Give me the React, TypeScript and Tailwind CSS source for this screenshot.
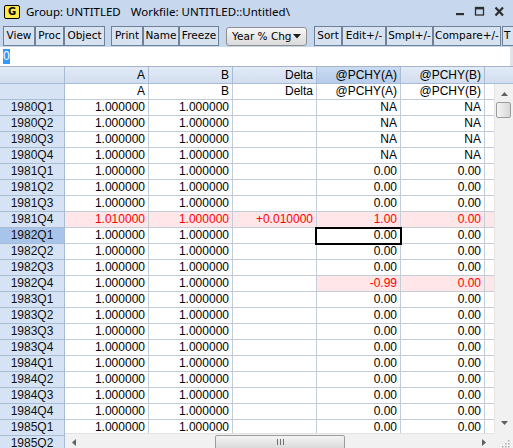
import React from "react";

type Hl = "none" | "row" | "pch";
interface DataRow {
  label: string;
  a: string;
  b: string;
  d: string;
  pa: string;
  pb: string;
  hl: Hl;
}

function buildRows(): DataRow[] {
  const out: DataRow[] = [];
  for (let y = 1980; y <= 1985; y++) {
    for (let q = 1; q <= 4; q++) {
      const label = `${y}Q${q}`;
      const early = y === 1980;
      let a = "1.000000";
      let d = "";
      let pa = early ? "NA" : "0.00";
      const pb = early ? "NA" : "0.00";
      let hl: Hl = "none";
      if (label === "1981Q4") {
        a = "1.010000";
        d = "+0.010000";
        pa = "1.00";
        hl = "row";
      }
      if (label === "1982Q4") {
        pa = "-0.99";
        hl = "pch";
      }
      out.push({ label, a, b: "1.000000", d, pa, pb, hl });
    }
  }
  return out.slice(0, 22);
}

const rows = buildRows();

function ToolButton({ label, className }: { label: string; className: string }) {
  return (
    <div
      className={
        "h-[20px] shrink-0 flex items-center justify-center border border-[#6f8099] bg-[#d8e3f2] text-[10.5px] text-black font-['DejaVu_Sans',sans-serif] " +
        className
      }
    >
      {label}
    </div>
  );
}

function HeaderCell({ label, selected }: { label: string; selected?: boolean }) {
  return (
    <div
      className={
        "h-[17px] w-[84px] shrink-0 border-b border-r border-[#a9bcd6] pr-[3px] pt-[1px] text-right text-[12px] leading-[15px] text-black bg-gradient-to-b " +
        (selected ? "from-[#cadbf3] to-[#b7cceb]" : "from-[#e2ebf7] to-[#d2deef]")
      }
    >
      {label}
    </div>
  );
}

function DataCell({
  value,
  pink,
  children,
}: {
  value: string;
  pink?: boolean;
  children?: React.ReactNode;
}) {
  return (
    <div
      className={
        "relative h-[16px] w-[84px] shrink-0 border-b border-r border-[#c4ccd8] pr-[3px] text-right text-[12px] leading-[15px] " +
        (pink ? "bg-[#ffe6e8] text-[#ff0000]" : "bg-white text-black")
      }
    >
      {value}
      {children}
    </div>
  );
}

function Arrow({ dir }: { dir: "up" | "down" | "left" | "right" }) {
  const pts =
    dir === "up"
      ? "0,4 7,4 3.5,0"
      : dir === "down"
      ? "0,0 7,0 3.5,4"
      : dir === "left"
      ? "4,0 4,7 0,3.5"
      : "0,0 0,7 4,3.5";
  const w = dir === "up" || dir === "down" ? 7 : 4;
  const h = dir === "up" || dir === "down" ? 4 : 7;
  return (
    <svg width={w} height={h} viewBox={`0 0 ${w} ${h}`}>
      <polygon points={pts} fill="#606060" />
    </svg>
  );
}

export default function App() {
  return (
    <div className="relative w-[513px] h-[448px] overflow-hidden bg-[#c6d7ee] font-['Liberation_Sans',Arial,sans-serif] text-black">
      {/* Title bar */}
      <div className="h-[24px] flex items-center pl-[4px] pr-[7px]">
        <div className="w-[16px] h-[14px] rounded-[2px] border border-black bg-[#ffe94d] flex items-center justify-center text-[10px] font-bold leading-none font-['DejaVu_Sans',sans-serif]">
          G
        </div>
        <span className="ml-[6px] font-['Noto_Sans',sans-serif] text-[11.5px] leading-none">
          Group: UNTITLED
        </span>
        <span className="ml-[10px] font-['Noto_Sans',sans-serif] text-[11.5px] leading-none">
          Workfile: UNTITLED::Untitled\
        </span>
        <div className="ml-auto flex items-center">
          <svg width="50" height="12" viewBox="0 0 50 12">
            <rect x="0" y="7" width="8" height="2.2" fill="#2e2e2e" />
            <rect x="19.5" y="1.5" width="8" height="7.5" fill="none" stroke="#2e2e2e" strokeWidth="1.3" />
            <rect x="19" y="1" width="9" height="2.4" fill="#2e2e2e" />
            <path d="M39.5 1.5 L47 9.5 M47 1.5 L39.5 9.5" stroke="#2e2e2e" strokeWidth="2.2" />
          </svg>
        </div>
      </div>

      {/* Toolbar */}
      <div className="h-[23px] flex items-start pt-[2px] pl-[3px] overflow-hidden">
        <ToolButton label="View" className="w-[32px]" />
        <ToolButton label="Proc" className="w-[29px]" />
        <ToolButton label="Object" className="w-[41px]" />
        <ToolButton label="Print" className="ml-[6px] w-[32px]" />
        <ToolButton label="Name" className="w-[36px]" />
        <ToolButton label="Freeze" className="w-[40px]" />
        <div className="ml-[7px] mt-[1px] h-[19px] w-[81px] shrink-0 rounded-[3px] border border-[#8d8f92] bg-gradient-to-b from-[#f7f7f7] to-[#dadada] flex items-center pl-[5px] pr-[5px] text-[10.5px] font-['DejaVu_Sans',sans-serif]">
          <span>Year % Chg</span>
          <span className="ml-auto flex">
            <svg width="8" height="5" viewBox="0 0 8 5">
              <polygon points="0,0 8,0 4,4.5" fill="#1e1e1e" />
            </svg>
          </span>
        </div>
        <ToolButton label="Sort" className="ml-[7px] w-[28px]" />
        <ToolButton label="Edit+/-" className="w-[44px]" />
        <ToolButton label="Smpl+/-" className="w-[47px]" />
        <ToolButton label="Compare+/-" className="w-[68px]" />
        <ToolButton label="T" className="ml-[1px] w-[20px] justify-start pl-[1px]" />
      </div>

      {/* Edit line */}
      <div className="h-[20px] flex border-b border-[#a7b4c7]">
        <div className="flex-1 flex items-start bg-white pl-[3px] pt-[2px]">
          <div className="h-[15px] bg-[#3399ff] text-white text-[12px] leading-[15px]">0</div>
        </div>
        <div className="w-[3px] bg-[#dfe3ea]" />
      </div>

      {/* Column headers */}
      <div className="flex">
        <div className="h-[17px] w-[65px] shrink-0 border-b border-r border-[#a9bcd6] bg-gradient-to-b from-[#e2ebf7] to-[#d2deef]" />
        <HeaderCell label="A" />
        <HeaderCell label="B" />
        <HeaderCell label="Delta" />
        <HeaderCell label="@PCHY(A)" selected />
        <HeaderCell label="@PCHY(B)" />
        <div className="h-[17px] flex-1 border-b border-[#a9bcd6] bg-gradient-to-b from-[#e2ebf7] to-[#d2deef]" />
      </div>

      {/* Grid body */}
      <div className="flex">
        {/* Row headers */}
        <div className="w-[65px] shrink-0 flex flex-col">
          <div className="h-[16px] border-b border-r border-[#a9bcd6] bg-[#d6e3f4]" />
          {rows.map((r) => (
            <div
              key={r.label}
              className={
                "h-[16px] shrink-0 border-b border-r border-[#a9bcd6] text-center text-[12px] leading-[15px] text-[#111] " +
                (r.label === "1982Q1" ? "bg-[#a9c4ea]" : "bg-[#d6e3f4]")
              }
            >
              {r.label}
            </div>
          ))}
        </div>

        {/* Data area with horizontal scrollbar */}
        <div className="w-[429px] shrink-0 flex flex-col">
          <div className="h-[349px] overflow-hidden flex flex-col bg-white">
            <div className="flex shrink-0">
              <DataCell value="A" />
              <DataCell value="B" />
              <DataCell value="Delta" />
              <DataCell value="@PCHY(A)" />
              <DataCell value="@PCHY(B)" />
              <div className="h-[16px] flex-1 border-b border-[#c4ccd8] bg-white" />
            </div>
            {rows.map((r) => {
              const rowPink = r.hl === "row";
              const pchPink = r.hl === "row" || r.hl === "pch";
              return (
                <div key={r.label} className="flex shrink-0">
                  <DataCell value={r.a} pink={rowPink} />
                  <DataCell value={r.b} pink={rowPink} />
                  <DataCell value={r.d} pink={rowPink} />
                  <DataCell value={r.pa} pink={pchPink}>
                    {r.label === "1982Q1" && (
                      <div className="absolute -left-[2px] -top-[1px] z-10 h-[18px] w-[87px] border-2 border-black" />
                    )}
                  </DataCell>
                  <DataCell value={r.pb} pink={pchPink} />
                  <div
                    className={
                      "h-[16px] flex-1 border-b border-[#c4ccd8] " +
                      (pchPink ? "bg-[#ffe6e8]" : "bg-white")
                    }
                  />
                </div>
              );
            })}
          </div>
          {/* Horizontal scrollbar */}
          <div className="h-[17px] flex items-center bg-[#f1f1f1] border-t border-[#e2e2e2]">
            <div className="w-[17px] flex justify-center">
              <Arrow dir="left" />
            </div>
            <div className="ml-[133px] h-[15px] w-[130px] rounded-[2px] border border-[#9c9c9c] bg-gradient-to-b from-[#f4f4f4] to-[#d8d8d8] flex items-center justify-center">
              <svg width="7" height="6" viewBox="0 0 7 6">
                <rect x="0" y="0" width="1" height="6" fill="#707070" />
                <rect x="3" y="0" width="1" height="6" fill="#707070" />
                <rect x="6" y="0" width="1" height="6" fill="#707070" />
              </svg>
            </div>
            <div className="ml-auto w-[17px] flex justify-center pr-[3px]">
              <Arrow dir="right" />
            </div>
          </div>
        </div>

        {/* Vertical scrollbar */}
        <div className="w-[19px] shrink-0 flex flex-col">
          <div className="h-[349px] flex flex-col bg-[#f1f1f1] border-l border-[#e4e4e4]">
            <div className="h-[17px] flex items-center justify-center pt-[2px]">
              <Arrow dir="up" />
            </div>
            <div className="ml-[1px] mt-[1px] h-[16px] w-[15px] rounded-[2px] border border-[#9c9c9c] bg-gradient-to-r from-[#f4f4f4] to-[#d8d8d8]" />
            <div className="mt-auto h-[17px] flex items-center justify-center pb-[4px]">
              <Arrow dir="down" />
            </div>
          </div>
          <div className="h-[17px] bg-[#f1f1f1] flex items-start justify-end pr-[3px] pt-[6px]">
            <svg width="9" height="9" viewBox="0 0 9 9">
              <rect x="7" y="1" width="1.5" height="1.5" fill="#b0b0b0" />
              <rect x="4" y="4" width="1.5" height="1.5" fill="#b0b0b0" />
              <rect x="7" y="4" width="1.5" height="1.5" fill="#b0b0b0" />
              <rect x="1" y="7" width="1.5" height="1.5" fill="#b0b0b0" />
              <rect x="4" y="7" width="1.5" height="1.5" fill="#b0b0b0" />
              <rect x="7" y="7" width="1.5" height="1.5" fill="#b0b0b0" />
            </svg>
          </div>
        </div>
      </div>
    </div>
  );
}
